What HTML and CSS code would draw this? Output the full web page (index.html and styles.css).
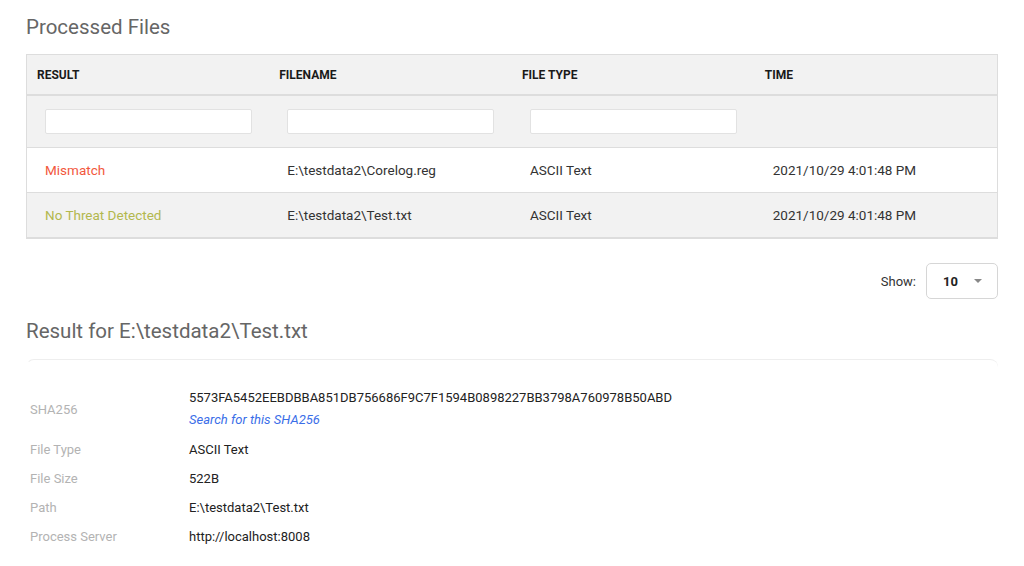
FILE: index.html
```html
<!DOCTYPE html>
<html lang="en">
<head>
  <meta charset="UTF-8">
  <title>Processed Files</title>
  <link rel="stylesheet" href="styles.css">
</head>
<body>
  <div class="page">
    <h2 class="title">Processed Files</h2>

    <table class="files">
      <thead>
        <tr class="head">
          <th>Result</th>
          <th>Filename</th>
          <th>File Type</th>
          <th>Time</th>
        </tr>
        <tr class="filters">
          <td><input type="text"></td>
          <td><input type="text"></td>
          <td><input type="text"></td>
          <td></td>
        </tr>
      </thead>
      <tbody>
        <tr>
          <td class="mismatch">Mismatch</td>
          <td>E:\testdata2\Corelog.reg</td>
          <td>ASCII Text</td>
          <td>2021/10/29 4:01:48 PM</td>
        </tr>
        <tr class="alt">
          <td class="clean">No Threat Detected</td>
          <td>E:\testdata2\Test.txt</td>
          <td>ASCII Text</td>
          <td>2021/10/29 4:01:48 PM</td>
        </tr>
      </tbody>
    </table>

    <div class="pager">
      <span>Show:</span>
      <div class="select">10 <span class="caret"></span></div>
    </div>

    <h2 class="title result-title">Result for E:\testdata2\Test.txt</h2>

    <div class="card">
      <div class="row sha">
        <div class="label">SHA256</div>
        <div class="value">
          5573FA5452EEBDBBA851DB756686F9C7F1594B0898227BB3798A760978B50ABD
          <a class="link" href="#">Search for this SHA256</a>
        </div>
      </div>
      <div class="row">
        <div class="label">File Type</div>
        <div class="value">ASCII Text</div>
      </div>
      <div class="row">
        <div class="label">File Size</div>
        <div class="value">522B</div>
      </div>
      <div class="row">
        <div class="label">Path</div>
        <div class="value">E:\testdata2\Test.txt</div>
      </div>
      <div class="row">
        <div class="label">Process Server</div>
        <div class="value">http://localhost:8008</div>
      </div>
    </div>
  </div>
</body>
</html>
```

FILE: styles.css
```css
html, body {
  margin: 0;
  padding: 0;
  background: #fff;
  font-family: Roboto, "Liberation Sans", sans-serif;
  font-size: 13px;
  color: #222;
}
.page {
  padding: 14px 26px 0 26px;
}
.title {
  margin: 0;
  font-size: 20.5px;
  font-weight: normal;
  color: #666;
  line-height: 26px;
}
.files {
  margin-top: 14px;
  width: 100%;
  border-collapse: collapse;
  border: 1px solid #ddd;
  border-bottom: 2px solid #ddd;
  table-layout: fixed;
}
.files th {
  text-align: left;
  text-transform: uppercase;
  font-size: 12px;
  font-weight: bold;
  color: #1a1a1a;
  height: 39px;
  padding: 0 10px;
  background: #f2f2f2;
  border-bottom: 2px solid #ddd;
}
.filters td {
  background: #f2f2f2;
  height: 51px;
  padding: 0 18px;
  border-bottom: 1px solid #ddd;
}
.filters input {
  display: block;
  box-sizing: border-box;
  width: 207px;
  height: 25px;
  border: 1px solid #e2e2e2;
  border-radius: 2px;
  background: #fff;
  margin-top: 0;
}
.files tbody td {
  height: 44px;
  padding: 0 18px;
  color: #333;
  font-size: 13.5px;
  border-bottom: 1px solid #ddd;
}
.files tbody tr:last-child td {
  border-bottom: none;
}
.files tbody tr.alt td {
  background: #f2f2f2;
}
.files tbody td.mismatch { color: #f2583e; }
.files tbody td.clean { color: #b2b84e; }

.pager {
  display: flex;
  justify-content: flex-end;
  align-items: center;
  gap: 10px;
  margin-top: 24px;
  color: #333;
}
.select {
  box-sizing: border-box;
  width: 72px;
  height: 36px;
  border: 1px solid #d6d6d6;
  border-radius: 5px;
  display: flex;
  align-items: center;
  padding-left: 16px;
  gap: 16px;
  font-weight: bold;
  color: #222;
}
.caret {
  width: 0;
  height: 0;
  border-left: 4px solid transparent;
  border-right: 4px solid transparent;
  border-top: 4px solid #888;
}
.result-title {
  margin-top: 19px;
}
.card {
  margin-top: 15px;
  border-top: 1px solid #eee;
  border-left: 1px solid transparent;
  border-top-left-radius: 8px;
  border-top-right-radius: 8px;
  padding-top: 27px;
}
.row {
  display: flex;
  align-items: center;
  min-height: 29px;
}
.row.sha {
  padding-bottom: 4px;
}
.label {
  width: 159px;
  padding-left: 3px;
  color: #b3b3b3;
}
.value {
  color: #222;
  line-height: 22px;
}
.link {
  display: block;
  color: #3a6ee8;
  font-style: italic;
  text-decoration: none;
}
```
